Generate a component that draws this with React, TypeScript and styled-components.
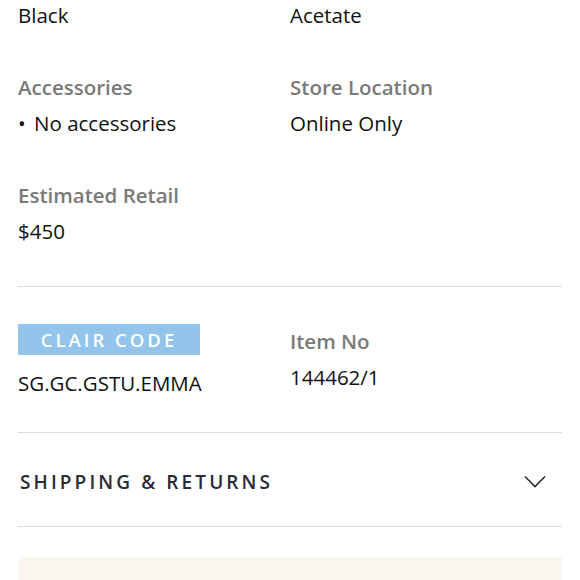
import React from "react";
import styled, { createGlobalStyle } from "styled-components";

const GlobalStyle = createGlobalStyle`
    html, body {
        margin: 0;
        padding: 0;
        background: #ffffff;
    }

    body {
        font-family: "Open Sans", "Noto Sans", sans-serif;
        color: #111111;
        -webkit-font-smoothing: antialiased;
    }
`;

const Page = styled.div`
    width: 580px;
    padding: 0 18px;
    box-sizing: border-box;
    overflow: hidden;
`;

const Section = styled.section<{ top: number; bottom: number }>`
    display: grid;
    grid-template-columns: 272px 1fr;
    row-gap: 46px;
    padding: ${p => p.top}px 0 ${p => p.bottom}px;
    border-bottom: 1px solid #dddddd;
`;

const Field = styled.div<{ offset?: number }>`
    display: flex;
    flex-direction: column;
    align-items: flex-start;
    padding-top: ${p => p.offset ?? 0}px;
`;

const Label = styled.div`
    font-size: 20.5px;
    line-height: 26px;
    font-weight: 600;
    color: #7a7a7a;
`;

const Badge = styled.div`
    height: 31px;
    width: 182px;
    box-sizing: border-box;
    background: #92c4ec;
    color: #ffffff;
    font-size: 18.5px;
    font-weight: 600;
    letter-spacing: 3px;
    line-height: 31px;
    text-align: center;
`;

const Value = styled.div<{ gap?: number }>`
    margin-top: ${p => p.gap ?? 10}px;
    font-size: 20.5px;
    line-height: 26px;
    color: #111111;
`;

const Bullet = styled.span`
    margin-right: 3px;
`;

const Accordion = styled.button`
    display: flex;
    width: 100%;
    height: 94px;
    align-items: center;
    justify-content: space-between;
    padding: 5px 16px 0 2px;
    box-sizing: border-box;
    background: none;
    border: none;
    border-bottom: 1px solid #dddddd;
    font-family: inherit;
    cursor: pointer;
`;

const AccordionTitle = styled.span`
    font-size: 19px;
    font-weight: 600;
    letter-spacing: 3.1px;
    color: #2b2b35;
`;

const Promo = styled.div`
    margin-top: 30px;
    height: 60px;
    background: #fcf6f1;
`;

const Chevron = () => (
    <svg width="22" height="14" viewBox="0 0 22 14" fill="none">
        <path d="M1 1.5 L11 11.5 L21 1.5" stroke="#2b2b35" strokeWidth="1.6" />
    </svg>
);

export default function App() {
    return (
        <Page>
            <GlobalStyle />
            <Section top={2} bottom={42}>
                <Field>
                    <Value gap={0}>Black</Value>
                </Field>
                <Field>
                    <Value gap={0}>Acetate</Value>
                </Field>
                <Field>
                    <Label>Accessories</Label>
                    <Value>
                        <Bullet>•</Bullet> No accessories
                    </Value>
                </Field>
                <Field>
                    <Label>Store Location</Label>
                    <Value>Online Only</Value>
                </Field>
                <Field>
                    <Label>Estimated Retail</Label>
                    <Value>$450</Value>
                </Field>
                <Field />
            </Section>
            <Section top={37} bottom={36}>
                <Field>
                    <Badge>CLAIR CODE</Badge>
                    <Value gap={15}>SG.GC.GSTU.EMMA</Value>
                </Field>
                <Field offset={4}>
                    <Label>Item No</Label>
                    <Value>144462/1</Value>
                </Field>
            </Section>
            <Accordion type="button">
                <AccordionTitle>SHIPPING &amp; RETURNS</AccordionTitle>
                <Chevron />
            </Accordion>
            <Promo />
        </Page>
    );
}
